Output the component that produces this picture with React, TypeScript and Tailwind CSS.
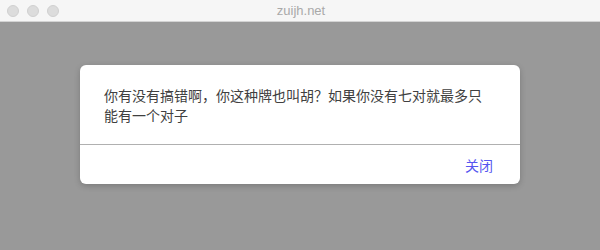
import React from "react";

export default function App() {
  return (
    <div className="w-[600px] h-[250px] flex flex-col overflow-hidden" style={{ fontFamily: '"Liberation Sans", "Noto Sans CJK SC", sans-serif' }}>
      <div className="relative h-[22px] shrink-0 bg-[#f6f6f6] border-b border-[#d3d3d3] flex items-center">
        <div className="flex gap-[8px] pl-[7px]">
          <span className="w-[12px] h-[12px] rounded-full bg-[#dcdcdc] border border-[#d0d0d0]" />
          <span className="w-[12px] h-[12px] rounded-full bg-[#dcdcdc] border border-[#d0d0d0]" />
          <span className="w-[12px] h-[12px] rounded-full bg-[#dcdcdc] border border-[#d0d0d0]" />
        </div>
        <div className="absolute inset-0 flex items-center justify-center text-[13px] text-[#a9a9a9] pl-[2px]">zuijh.net</div>
      </div>
      <div className="flex-1 bg-[#999999] flex justify-center pt-[43px]">
        <div className="w-[440px] h-[119px] bg-white rounded-[6px] shadow-[0_2px_6px_rgba(0,0,0,0.2)] flex flex-col" style={{ fontFamily: '"Noto Sans CJK SC", sans-serif' }}>
          <div className="pt-[20px] pb-[19px] px-[24px] text-[14px] leading-[20px] text-[#404040] border-b border-[#b0b0b0] [text-spacing-trim:space-all] [font-feature-settings:'fwid']">
            你有没有搞错啊，你这种牌也叫胡？如果你没有七对就最多只<br />能有一个对子
          </div>
          <div className="flex-1 flex items-center justify-end pr-[27px]">
            <span className="text-[14px] text-[#5656f0] leading-[20px]">关闭</span>
          </div>
        </div>
      </div>
    </div>
  );
}
